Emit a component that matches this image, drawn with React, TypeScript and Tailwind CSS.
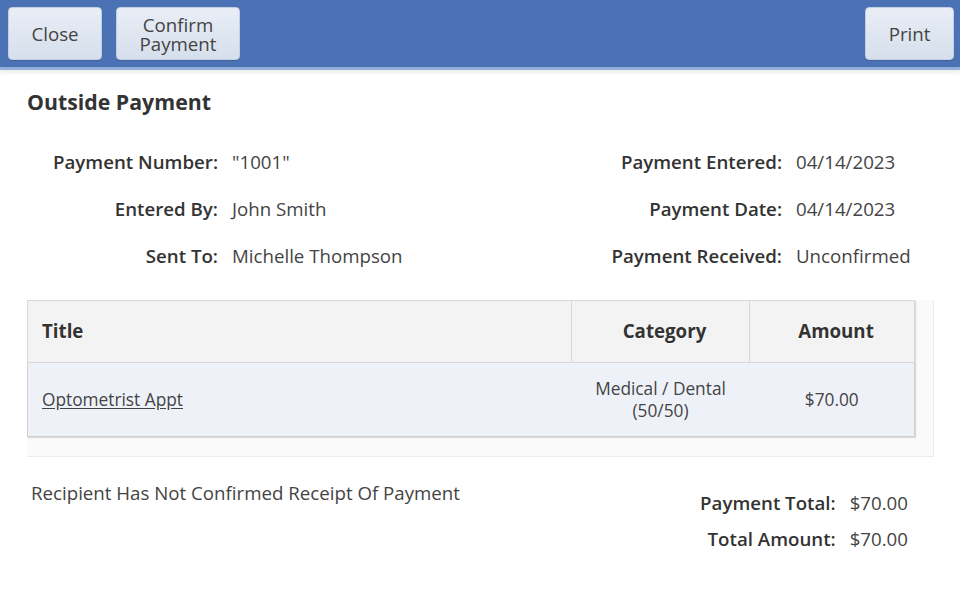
import React from "react";

const font = { fontFamily: '"Open Sans", "Noto Sans", sans-serif' };

function Btn({ children, w }: { children: React.ReactNode; w: string }) {
  return (
    <button
      className={`${w} h-[53px] rounded-[4px] border border-[#c3cfe2] bg-gradient-to-b from-[#e9eef6] to-[#d6dfec] text-[18.7px] leading-[19px] text-[#444] shadow-[0_1px_1px_rgba(0,0,0,0.15)]`}
    >
      {children}
    </button>
  );
}

function Label({ children }: { children: React.ReactNode }) {
  return <div className="text-right font-semibold text-[#333]">{children}</div>;
}
function Val({ children }: { children: React.ReactNode }) {
  return <div className="text-[#444]">{children}</div>;
}

export default function App() {
  return (
    <div style={font} className="w-[960px] h-[597px] bg-white overflow-hidden">
      <div className="h-[67px] bg-[#4b72b5] flex items-center justify-between pl-[8px] pr-[6px]">
        <div className="flex gap-[14px]">
          <Btn w="w-[94px]">Close</Btn>
          <Btn w="w-[124px]">
            Confirm
            <br />
            Payment
          </Btn>
        </div>
        <Btn w="w-[89px]">Print</Btn>
      </div>
      <div className="h-[3px] bg-[#93afdb] shadow-[0_2px_4px_rgba(0,0,0,0.12)]" />

      <div className="pl-[27px] pr-[26px]">
        <h1 className="mt-[18px] text-[21.3px] font-bold text-[#333] leading-[28px]">Outside Payment</h1>

        <div className="mt-[32px] grid grid-cols-[191px_1fr_auto_138px] gap-x-[14px] gap-y-[19px] text-[18.7px] leading-[28px]">
          <Label>Payment Number:</Label>
          <Val>"1001"</Val>
          <Label>Payment Entered:</Label>
          <Val>04/14/2023</Val>
          <Label>Entered By:</Label>
          <Val>John Smith</Val>
          <Label>Payment Date:</Label>
          <Val>04/14/2023</Val>
          <Label>Sent To:</Label>
          <Val>Michelle Thompson</Val>
          <Label>Payment Received:</Label>
          <Val>Unconfirmed</Val>
        </div>

        <div className="mt-[30px] w-[907px] bg-[#fafafa] border-r border-b border-[#ececec] pr-[19px] pb-[19px]">
          <table className="w-[888px] border-collapse border border-[#cfcfcf] shadow-[1px_1px_1px_rgba(0,0,0,0.12)]">
            <thead>
              <tr className="h-[62px] bg-[#f3f3f3] text-[18.7px] font-bold text-[#333] [text-shadow:0_1px_0_#fff]">
                <th className="border border-[#d8d8d8] text-left pl-[14px] w-[544px]">Title</th>
                <th className="border border-[#d8d8d8] text-center pl-[8px] w-[178px]">Category</th>
                <th className="border border-[#d8d8d8] text-center pl-[8px]">Amount</th>
              </tr>
            </thead>
            <tbody>
              <tr className="h-[74px] bg-[#eef2f8] text-[17.3px] leading-[22px] text-[#444]">
                <td className="pl-[14px]">
                  <span className="underline underline-offset-2">Optometrist Appt</span>
                </td>
                <td className="text-center">
                  Medical / Dental
                  <br />
                  (50/50)
                </td>
                <td className="text-center">$70.00</td>
              </tr>
            </tbody>
          </table>
        </div>

        <div className="mt-[22px] flex justify-between text-[18.7px] leading-[28px]">
          <div className="pl-[4px] text-[#444]">Recipient Has Not Confirmed Receipt Of Payment</div>
          <div className="mt-[10px] mr-[26px] grid grid-cols-[auto_auto] gap-x-[14px] gap-y-[8px]">
            <Label>Payment Total:</Label>
            <Val>$70.00</Val>
            <Label>Total Amount:</Label>
            <Val>$70.00</Val>
          </div>
        </div>
      </div>
    </div>
  );
}
